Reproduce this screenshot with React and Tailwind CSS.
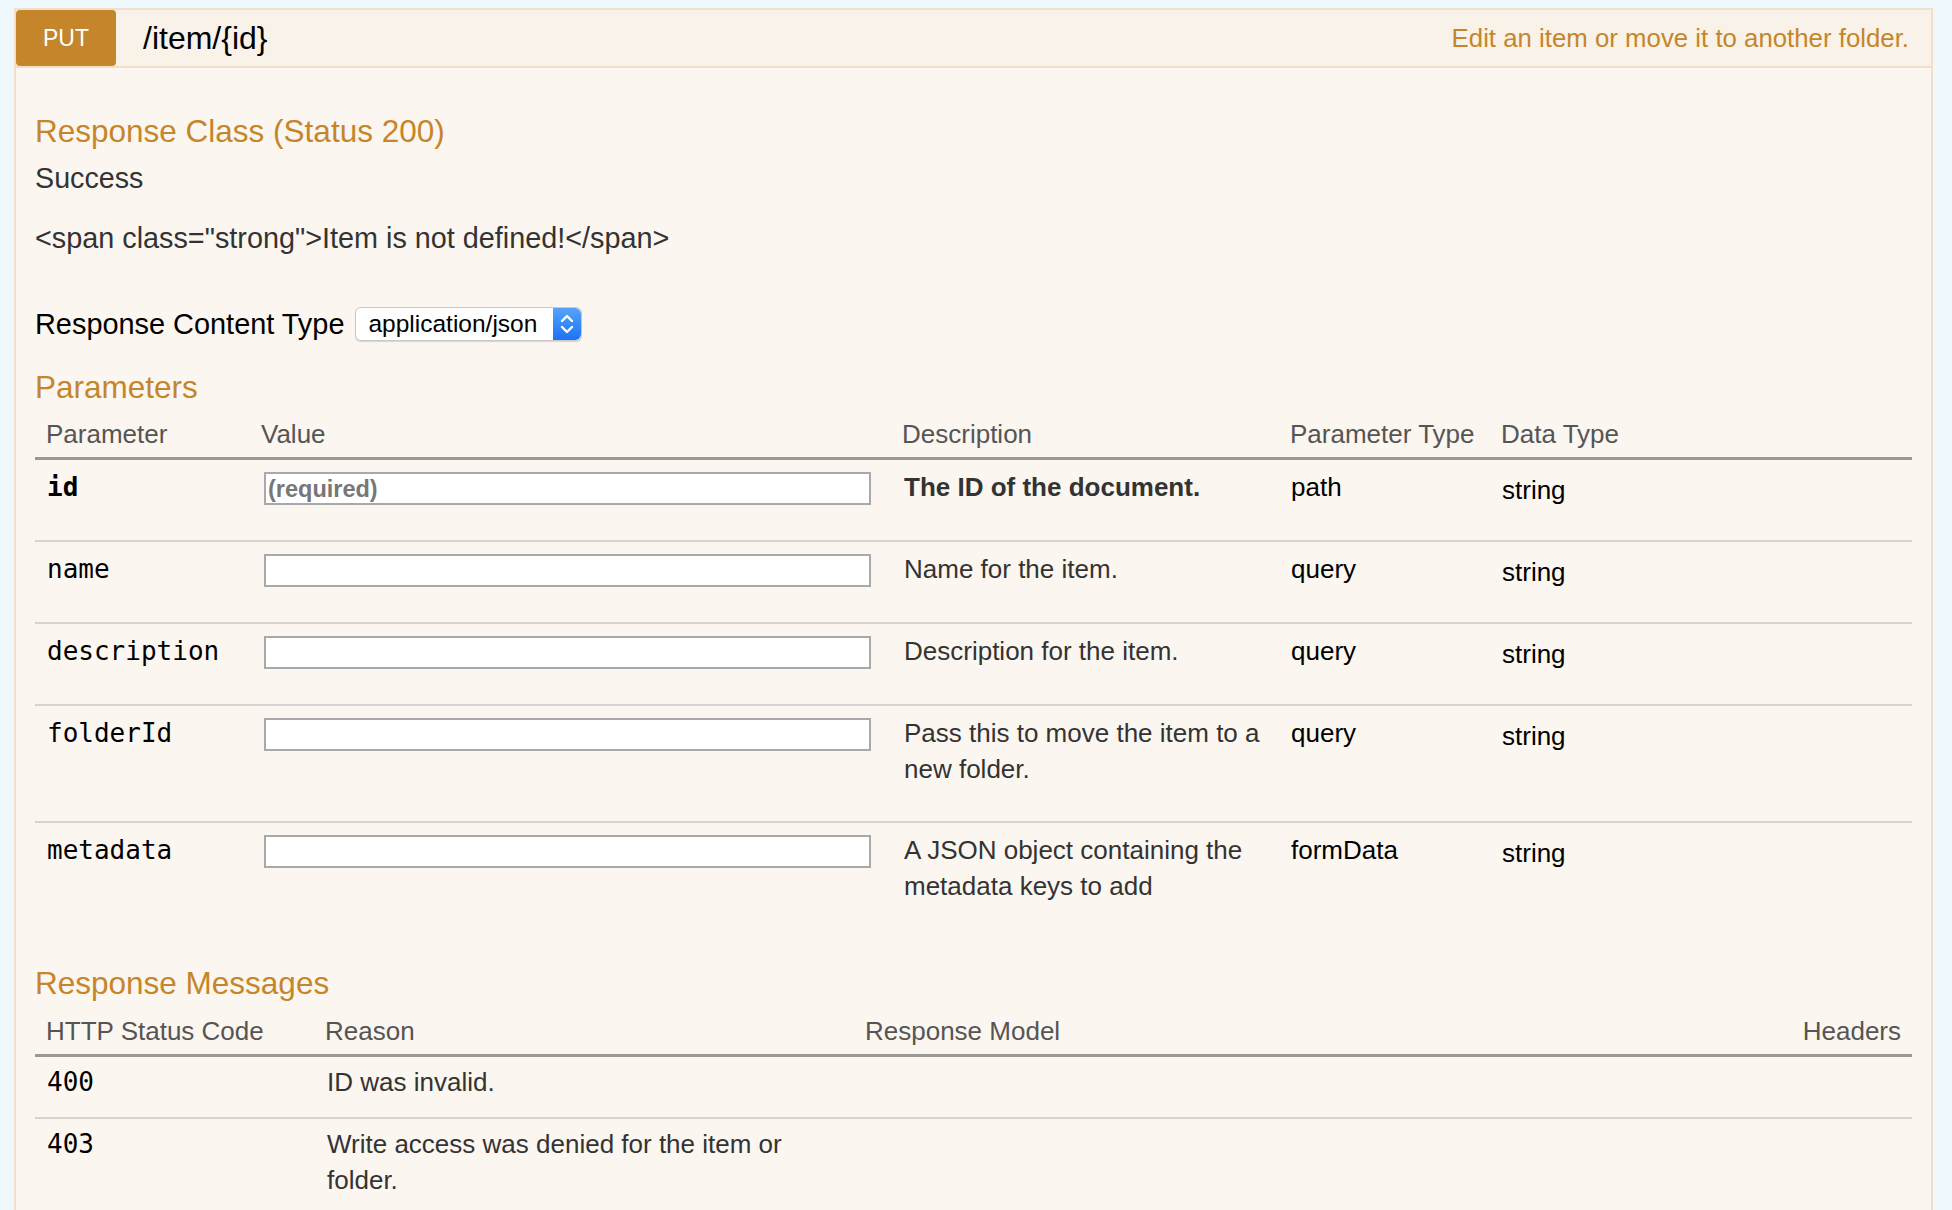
import React from "react";

const params = [
  { name: "id", bold: true, required: true, desc: "The ID of the document.", descBold: true, type: "path", data: "string" },
  { name: "name", desc: "Name for the item.", type: "query", data: "string" },
  { name: "description", desc: "Description for the item.", type: "query", data: "string" },
  { name: "folderId", desc: "Pass this to move the item to a new folder.", type: "query", data: "string", tall: true },
  { name: "metadata", desc: "A JSON object containing the metadata keys to add", type: "formData", data: "string", last: true },
];

const messages = [
  { code: "400", reason: "ID was invalid." },
  { code: "403", reason: "Write access was denied for the item or folder." },
];

const sans = { fontFamily: '"Liberation Sans", Arial, Helvetica, sans-serif' };
const mono = { fontFamily: '"DejaVu Sans Mono", Menlo, monospace' };

function SelectBox() {
  return (
    <div className="flex h-[34px] w-[227px] items-stretch rounded-[6px] border border-[#c9c9c9] bg-white shadow-[0_1px_1px_rgba(0,0,0,0.15)]">
      <div className="flex flex-1 items-center pl-[12px] text-[24.5px] text-black">application/json</div>
      <div className="flex w-[28px] items-center justify-center rounded-r-[6px] bg-gradient-to-b from-[#56a2fa] to-[#1a72f5]">
        <svg width="16" height="24" viewBox="0 0 16 24" fill="none" stroke="white" strokeWidth="2.4" strokeLinecap="round" strokeLinejoin="round">
          <path d="M3 9 L8 4 L13 9" />
          <path d="M3 15 L8 20 L13 15" />
        </svg>
      </div>
    </div>
  );
}

export default function App() {
  return (
    <div className="min-h-screen bg-[#eff8fc] pt-[8px] pl-[14px] pr-[19px]" style={sans}>
      <div className="border-2 border-b-0 border-[#f0e0ca] bg-[#fcf6f0]">
        {/* header */}
        <div className="flex h-[58px] items-stretch border-b-2 border-[#f0e0ca] bg-[#f9f2e9]">
          <div className="flex w-[100px] items-center justify-center rounded-[4px] bg-[#c5862b] text-[23px] text-white">
            PUT
          </div>
          <div className="ml-[27px] flex items-center text-[32px] leading-none text-black">/item/{"{id}"}</div>
          <div className="ml-auto mr-[22px] flex items-center text-[25.8px] text-[#c5862b]">
            Edit an item or move it to another folder.
          </div>
        </div>

        {/* body */}
        <div className="px-[19px] pb-[40px]">
          <h4 className="mt-[46px] text-[31.5px] leading-[35px] text-[#c5862b]">Response Class (Status 200)</h4>
          <p className="mt-[11px] text-[28.7px] leading-[36px] text-[#333]">Success</p>
          <p className="mt-[24px] text-[28.8px] leading-[36px] text-[#333]">
            {'<span class="strong">Item is not defined!</span>'}
          </p>

          <div className="mt-[50px] flex items-center gap-[11px]">
            <span className="text-[28.9px] leading-[36px] text-black">Response Content Type</span>
            <SelectBox />
          </div>

          <h4 className="mt-[28px] text-[31.5px] leading-[35px] text-[#c5862b]">Parameters</h4>

          <div className="mt-[11px] grid grid-cols-[216px_640px_389px_211px_1fr] border-b-[3px] border-[#999] pb-[5px] text-[26px] leading-[36px] text-[#555]">
            <div className="pl-[11px]">Parameter</div>
            <div className="pl-[10px]">Value</div>
            <div className="pl-[11px]">Description</div>
            <div className="pl-[10px]">Parameter Type</div>
            <div className="pl-[10px]">Data Type</div>
          </div>

          {params.map((p) => (
            <div
              key={p.name}
              className={`grid grid-cols-[216px_640px_389px_211px_1fr] pt-[9px] text-[26px] leading-[36px] ${
                p.tall ? "pb-[34px]" : "pb-[32px]"
              } ${p.last ? "" : "border-b-2 border-[#d4d4d4]"}`}
            >
              <div className={`pl-[12px] text-black ${p.bold ? "font-bold" : ""}`} style={mono}>
                {p.name}
              </div>
              <div className="pl-[13px] pt-[3px]">
                <div className="flex h-[33px] w-[607px] items-center border-2 border-[#a9a9a9] bg-white pl-[2px]">
                  {p.required && <span className="text-[23.5px] font-bold text-[#777]">(required)</span>}
                </div>
              </div>
              <div className={`pl-[13px] pr-[12px] text-[#333] ${p.descBold ? "font-bold" : ""}`}>{p.desc}</div>
              <div className="pl-[11px] text-black">{p.type}</div>
              <div className="pl-[11px] pt-[3px] text-black">{p.data}</div>
            </div>
          ))}

          <h4 className="mt-[30px] text-[31.5px] leading-[35px] text-[#c5862b]">Response Messages</h4>

          <div className="mt-[12px] grid grid-cols-[279px_540px_1fr_auto] border-b-[3px] border-[#999] pb-[5px] text-[26px] leading-[36px] text-[#555]">
            <div className="pl-[11px]">HTTP Status Code</div>
            <div className="pl-[11px]">Reason</div>
            <div className="pl-[11px]">Response Model</div>
            <div className="pr-[11px]">Headers</div>
          </div>

          {messages.map((m, i) => (
            <div
              key={m.code}
              className={`grid grid-cols-[279px_540px_1fr_auto] pt-[7px] pb-[17px] text-[26px] leading-[36px] ${
                i < messages.length - 1 ? "border-b-2 border-[#d4d4d4]" : ""
              }`}
            >
              <div className="pl-[12px] text-black" style={mono}>
                {m.code}
              </div>
              <div className="pl-[13px] pr-[11px] text-[#333]">{m.reason}</div>
              <div></div>
              <div></div>
            </div>
          ))}
        </div>
      </div>
    </div>
  );
}
